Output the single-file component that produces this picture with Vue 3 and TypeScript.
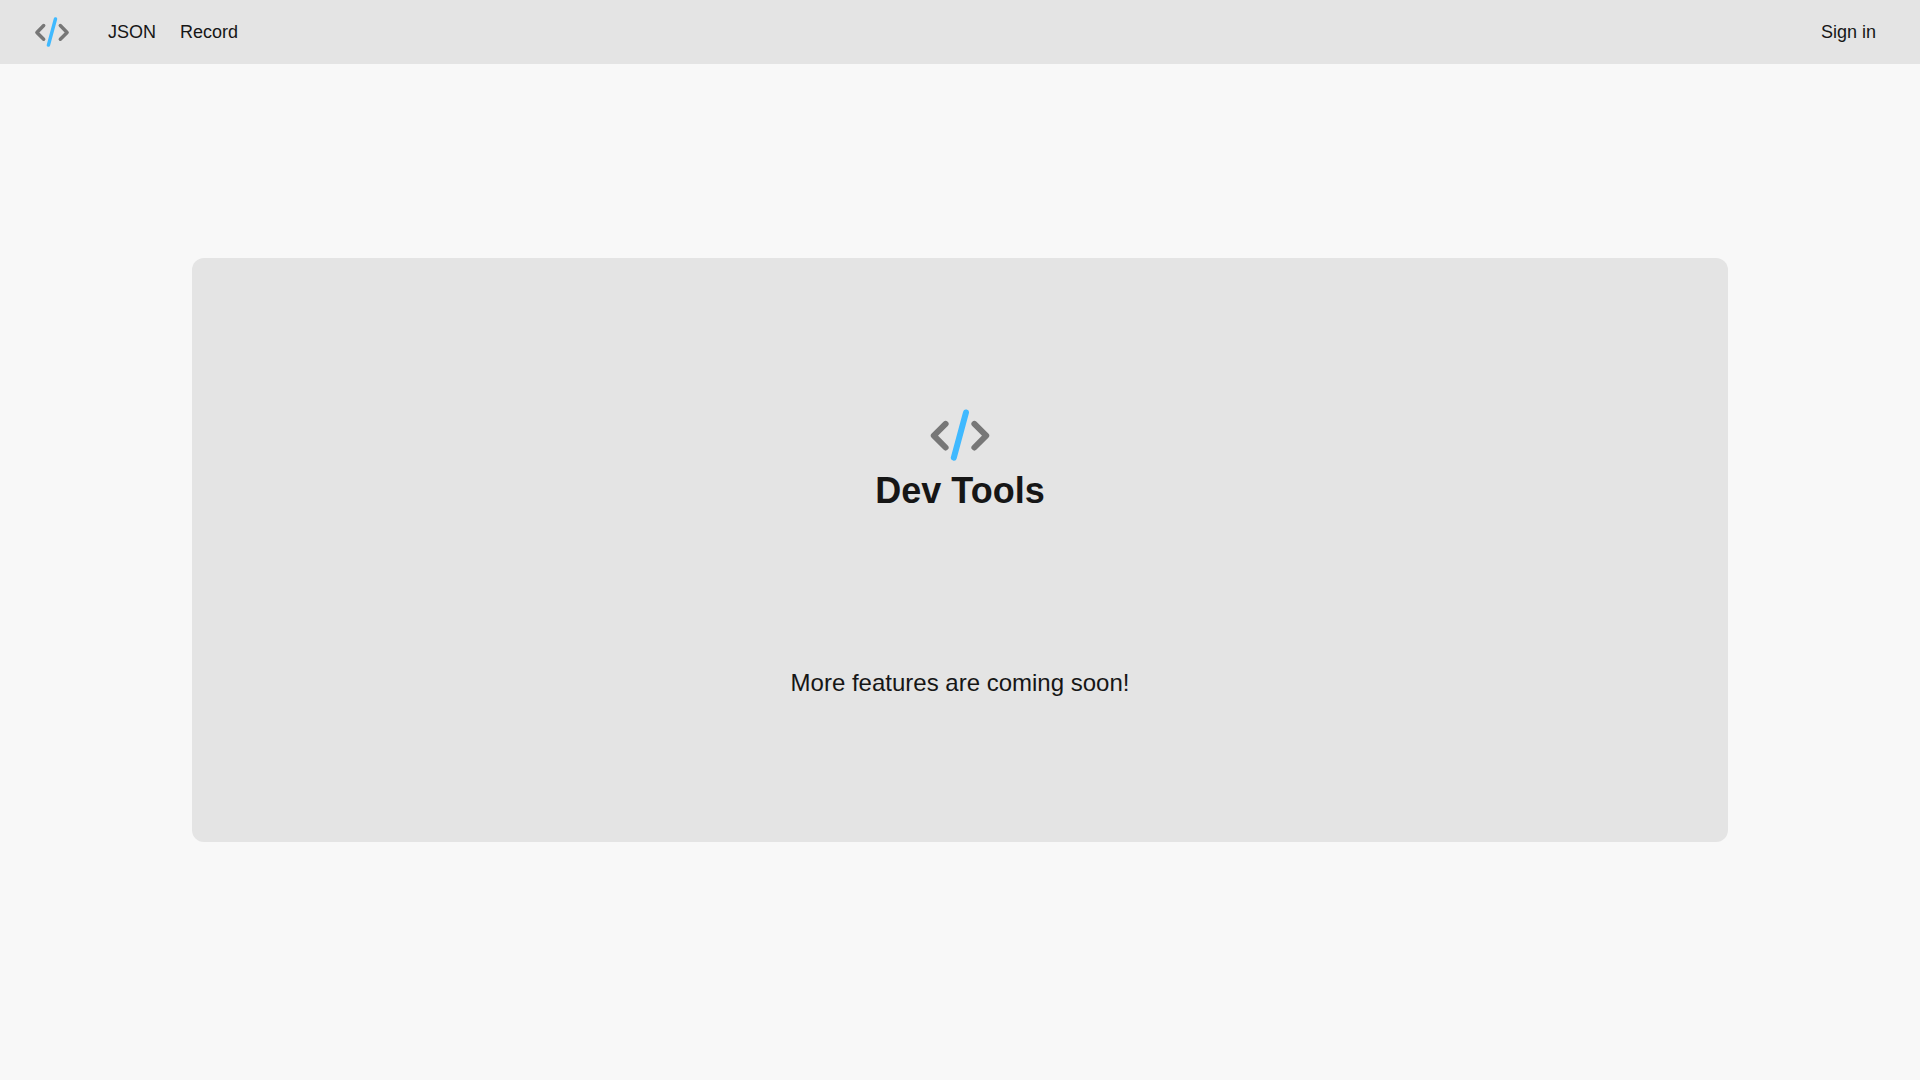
<script setup lang="ts">
interface NavItem {
  label: string
  href: string
}

const navItems: NavItem[] = [
  { label: 'JSON', href: '#json' },
  { label: 'Record', href: '#record' },
]
</script>

<template>
  <div class="page">
    <header class="navbar">
      <a class="brand" href="#home" aria-label="Dev Tools home">
        <svg class="logo logo-small" viewBox="0 0 64 52" aria-hidden="true">
          <path class="bracket" d="M17.6 14.9 5.8 26.7l11.8 11.8M46.4 14.9l11.8 11.8-11.8 11.8" />
          <path class="slash" d="M38 3.5 25.8 48.7" />
        </svg>
      </a>
      <nav class="links">
        <a v-for="item in navItems" :key="item.label" class="link" :href="item.href">{{ item.label }}</a>
      </nav>
      <a class="link" href="#sign-in">Sign in</a>
    </header>

    <main class="content">
      <section class="hero">
        <svg class="logo logo-large" viewBox="0 0 64 52" aria-hidden="true">
          <path class="bracket" d="M17.6 14.9 5.8 26.7l11.8 11.8M46.4 14.9l11.8 11.8-11.8 11.8" />
          <path class="slash" d="M38 3.5 25.8 48.7" />
        </svg>
        <h1 class="title">Dev Tools</h1>
        <p class="subtitle">More features are coming soon!</p>
      </section>
    </main>
  </div>
</template>

<style>
body {
  margin: 0;
  background: #f8f8f8;
}
</style>

<style scoped>
.page {
  min-height: 100vh;
  display: flex;
  flex-direction: column;
  box-sizing: border-box;
  color: #161616;
  font-family: "Liberation Sans", Arial, sans-serif;
}

.navbar {
  display: flex;
  align-items: center;
  height: 64px;
  padding: 0 44px 0 33px;
  box-sizing: border-box;
  background: #e4e4e4;
}

.brand {
  display: flex;
  margin-right: 37px;
}

.links {
  display: flex;
  flex: 1;
  gap: 24px;
}

.link {
  color: inherit;
  font-size: 18px;
  line-height: 24px;
  text-decoration: none;
}

.logo {
  display: block;
  fill: none;
  stroke-width: 6;
  stroke-linecap: round;
  stroke-linejoin: round;
}

.logo-small {
  width: 38px;
  height: 30px;
}

.logo-large {
  width: 64px;
  height: 52px;
}

.bracket {
  stroke: #777777;
}

.slash {
  stroke: #3fb9ff;
}

.content {
  flex: 1;
  display: flex;
  flex-direction: column;
  align-items: center;
  justify-content: center;
  padding-bottom: 44px;
}

.hero {
  display: flex;
  flex-direction: column;
  align-items: center;
  width: 80%;
  padding: 151px 24px 141px;
  box-sizing: border-box;
  border-radius: 12px;
  background: #e4e4e4;
}

.title {
  margin: 6px 0 150px;
  font-size: 36px;
  line-height: 48px;
  font-weight: 700;
}

.subtitle {
  margin: 0;
  font-size: 24px;
  line-height: 36px;
}
</style>
